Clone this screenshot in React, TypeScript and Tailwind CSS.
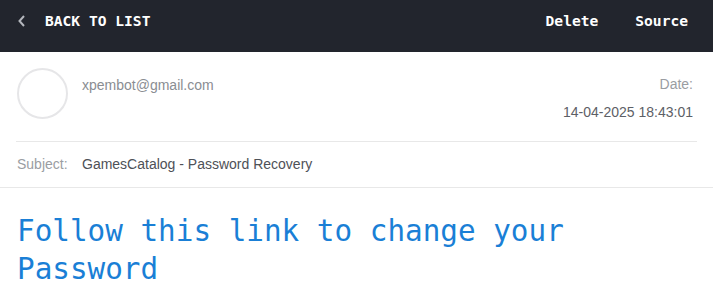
export default function App() {
  return (
    <div className="w-[713px] h-[305px] bg-white overflow-hidden">
      <Header />
      <MessageMeta />
      <div className="px-[17px] pt-[24px]">
        <h1 className="text-[29.3px] leading-[38px] text-[#1a7fd6] font-['DejaVu_Sans_Mono',monospace] font-normal">
          Follow this link to change your Password
        </h1>
      </div>
    </div>
  )
}

const Header = () => {
  return (
    <div className="h-[52px] pb-[10px] bg-[#22252d] flex flex-row items-center justify-between font-['DejaVu_Sans_Mono',monospace] font-bold text-[14.6px] text-white">
      <div className="flex flex-row items-center pl-[17px]">
        <svg width="9" height="12" viewBox="0 0 9 12" className="mr-[19px]">
          <path d="M7 1 L2.5 6 L7 11" fill="none" stroke="#b4b7bd" strokeWidth="2" />
        </svg>
        <span>BACK TO LIST</span>
      </div>
      <div className="flex flex-row items-center gap-[37px] pr-[25px]">
        <span>Delete</span>
        <span>Source</span>
      </div>
    </div>
  )
}

const MessageMeta = () => {
  return (
    <div className="font-['Liberation_Sans',Arial,sans-serif] text-[14px]">
      <div className="mx-[16px] h-[90px] flex flex-row justify-between border-b border-[#e8e8e8]">
        <div className="flex flex-row pt-[16px]">
          <div className="w-[51px] h-[51px] rounded-full border-2 border-[#e6e6e8] ml-[1px]"></div>
          <div className="ml-[14px] pt-[7px] text-[#8a8d92]">xpembot@gmail.com</div>
        </div>
        <div className="flex flex-col items-end pt-[22px] pr-[4px]">
          <div className="text-[#9a9da2]">Date:</div>
          <div className="mt-[7px] text-[#5d6066]">14-04-2025 18:43:01</div>
        </div>
      </div>
      <div className="h-[46px] border-b border-[#e8e8e8] flex flex-row items-center px-[17px]">
        <span className="w-[65px] text-[#9a9da2]">Subject:</span>
        <span className="text-[#4e5157]">GamesCatalog - Password Recovery</span>
      </div>
    </div>
  )
}
